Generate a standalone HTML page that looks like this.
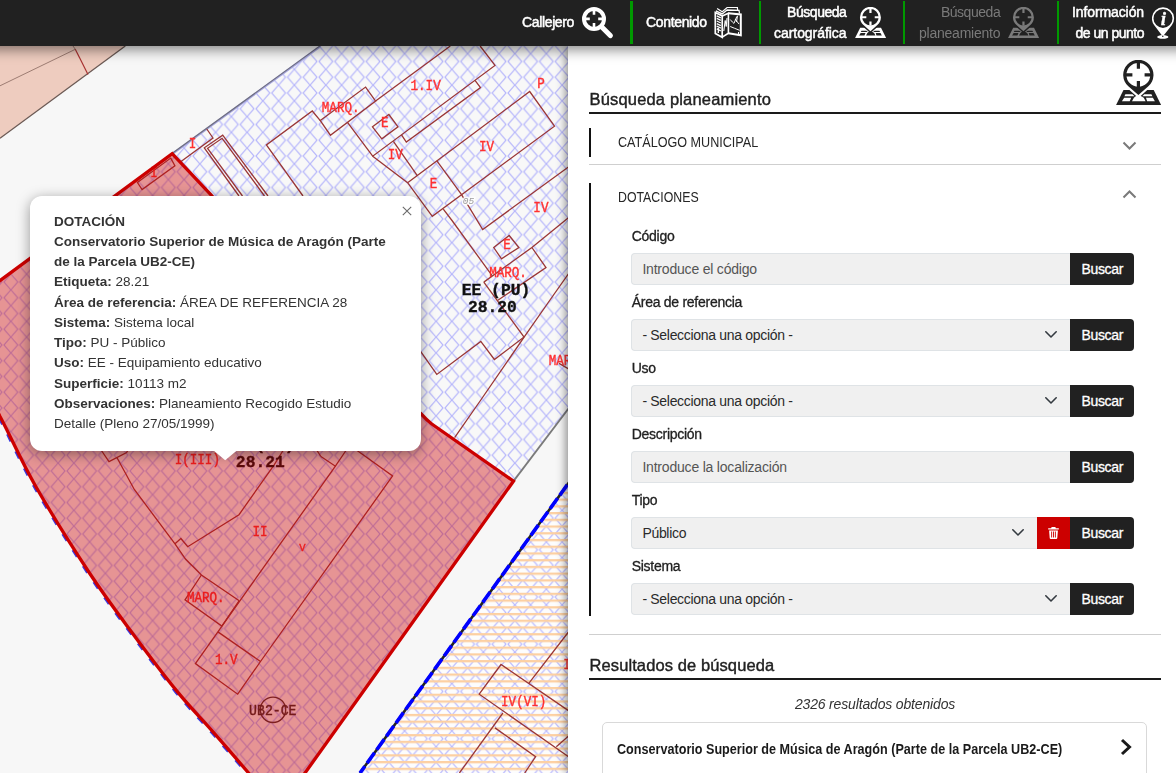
<!DOCTYPE html>
<html lang="es">
<head>
<meta charset="utf-8">
<title>Búsqueda planeamiento</title>
<style>
*{box-sizing:border-box}
html,body{margin:0;padding:0}
body{width:1176px;height:773px;overflow:hidden;position:relative;background:#f7f7f7;font-family:"Liberation Sans",sans-serif;color:#212121}
#map{will-change:transform;position:absolute;left:0;top:0;width:1176px;height:773px}
#nav{will-change:transform;position:absolute;left:0;top:0;width:1176px;height:46px;background:#212121;z-index:30}
#navsh{position:absolute;left:-60px;top:0;width:1296px;height:46px;z-index:29;box-shadow:0 2px 12px 2px rgba(0,0,0,.45)}
#nav .sep{position:absolute;top:1px;height:43px;width:3px;background:#009900}
#nav .t{position:absolute;color:#fff;font-size:14px;line-height:20px;white-space:nowrap;text-align:right;-webkit-text-stroke:.5px #fff}
#nav .t.dis{color:#7a7a7a;-webkit-text-stroke:0}
#nav svg{position:absolute}
#panel{position:absolute;left:568px;top:46px;width:608px;height:727px;background:#fff;z-index:20;box-shadow:-2px 0 9px rgba(0,0,0,.45)}
.abs{position:absolute}
.h2{position:absolute;left:21.500px;font-size:16.500px;line-height:20px;letter-spacing:.17px;white-space:nowrap;color:#212121;-webkit-text-stroke:.4px #212121}
.rule{position:absolute;left:21px;width:572px;height:2px;background:#1a1a1a}
.hr{position:absolute;left:21px;width:572px;height:1px;background:#cfcfcf}
.bar{position:absolute;left:21px;width:2px;background:#111}
.acc{position:absolute;left:50.400px;font-size:14px;transform-origin:0 0;transform:scaleX(.9);line-height:18px;white-space:nowrap;color:#262626}
.lbl{position:absolute;left:63.700px;font-size:14px;letter-spacing:-.27px;line-height:18px;white-space:nowrap;color:#212121;-webkit-text-stroke:.3px #212121}
.inp{position:absolute;left:63px;width:440px;height:32px;background:#f0f0f0;border:1px solid #dfe3e6;border-right:0;border-radius:4px 0 0 4px;font-size:14px;line-height:30px;padding-left:10.400px;color:#555;white-space:nowrap;letter-spacing:-.2px}
.inp.sel{color:#2a2a2a;letter-spacing:-.31px}
.btn{position:absolute;left:502px;width:64px;height:32px;background:#212121;border-radius:0 4px 4px 0;color:#fff;font-size:14px;line-height:32px;text-align:center;letter-spacing:-.36px;padding-left:.5px;-webkit-text-stroke:.3px #fff}
.chev{position:absolute}
#popup{will-change:transform;position:absolute;left:30px;top:195.5px;width:390.5px;height:255px;background:#fff;border-radius:12px;z-index:10;box-shadow:0 3px 14px rgba(0,0,0,.4);font-size:13.5px;line-height:20.25px;color:#333}
#popup .c{position:absolute;left:24px;top:15.500px;white-space:nowrap}
#popup b{font-weight:700}
#tip{position:absolute;z-index:11}
</style>
</head>
<body>
<svg id="map" width="1176" height="773" viewBox="0 0 1176 773">
<defs>
<pattern id="dia" x="3.0" y="6.350" width="15.75" height="15.75" patternUnits="userSpaceOnUse">
<path d="M7.85,-0.1 L14.75,7.875 L7.85,15.85 L0.95,7.875 Z" fill="none" stroke="#5a5aff" stroke-opacity=".42" stroke-width="1.15"/>
</pattern>
<pattern id="ora" x="0" y="0.520" width="20" height="6.730" patternUnits="userSpaceOnUse">
<rect x="0" y="0" width="20" height="2.300" fill="#fdd0a2"/>
</pattern>
<clipPath id="cBlue"><polygon points="173,153.4 320.7,46 600,46 600,385 513.5,481.1 431.8,424 421.2,413.9 421,195 211,195"/></clipPath>
<clipPath id="cOra"><polygon points="570,481 364,767 360,773 600,773 600,481"/></clipPath>
<path id="redshape" d="M0,416.5 C10.9,436.7 20.7,460.1 35.5,486.0 C50.3,511.9 72.5,547.3 88.8,572.0 C105.1,596.7 118.4,614.2 133.2,634.2 C148.0,654.2 164.2,675.6 177.5,691.9 C190.8,708.2 201.2,718.3 213.0,731.8 C224.8,745.3 238.8,761.6 248.6,773.0 C258.4,784.4 264.1,790.8 272.0,800.0 L285.7,800 L513.5,481.1 L431.8,424 Q427,420.5 421.2,413.9 L300,300 L211,194.8 L172.200,153.600 L0,280.600 L-6,285 L-6,404 Z"/>
<clipPath id="hclip"><polygon points="173,153.4 320.7,46 600,46 600,367 513.5,481.1 300,420 211,195"/><use href="#redshape"/></clipPath>
</defs>
<rect width="1176" height="773" fill="#f7f7f7"/>
<!-- beige top-left -->
<polygon points="0,40 125.3,46 0,138.2" fill="#eeccbf"/>
<polygon points="0,46 125.3,46 0,138.2" fill="#eeccbf"/>
<line x1="125.3" y1="46" x2="0" y2="138.2" stroke="#6b5a55" stroke-width="1.3"/>
<line x1="0" y1="85.8" x2="75.3" y2="49.3" stroke="#7a5a52" stroke-width=".7"/>
<line x1="75.3" y1="49.3" x2="73" y2="46" stroke="#7a5a52" stroke-width=".7"/>
<line x1="75.3" y1="49.3" x2="88" y2="74.6" stroke="#a83232" stroke-width="1.2"/>
<!-- blue hatch region -->
<polygon points="173,153.4 320.7,46 600,46 600,367 513.5,481.1 300,420 211,195" fill="#f8f8f8"/>
<rect x="-10" y="40" width="620" height="770" fill="url(#dia)" clip-path="url(#hclip)"/>
<line x1="173" y1="153.4" x2="320.7" y2="46" stroke="#a4a4dc" stroke-width="2.200"/><line x1="173" y1="152.800" x2="320.7" y2="45.400" stroke="#6e6e7c" stroke-width="1.100"/>
<line x1="513.5" y1="481.1" x2="600" y2="367" stroke="#7a7a7a" stroke-width="1.800"/>
<!-- orange region -->
<polygon points="570,481 360,773 600,773 600,481" fill="#fdfdfd"/>
<polygon points="570,481 360,773 600,773 600,481" fill="url(#dia)"/>
<polygon points="570,481 360,773 600,773 600,481" fill="url(#ora)"/>
<g fill="none" stroke="#9a3636" stroke-width="1.300" stroke-linejoin="miter">
<!-- A small I building -->
<path d="M206.8,129 L213,138 L181,161.4"/>
<!-- B building 2 (double outline) -->
<path d="M239,196 L204.3,147.8 L222.7,135.2 L268,196"/>
<path d="M242.500,196 L207.600,148.300 L222.100,138.300 L264.500,196"/>
<!-- C building 3 -->
<path d="M303,196 L266.4,145 L312.3,111 L320.3,120.6"/>
<!-- D MARQ -->
<path d="M320.3,120.6 L365.6,87.1 L375.6,101 L330.4,135.2 Z"/>
<!-- E 1.IV -->
<path d="M375.6,101 L450.3,46"/>
<path d="M480.1,46 L495,65.4 L372.7,156.2 L347.5,122.3"/>
<!-- F E square -->
<path d="M372.5,126.8 L388.9,114.5 L398,126.8 L381.8,138.8 Z"/>
<!-- G narrow strip -->
<path d="M475,80.3 L480.5,87.6 L406.3,142 L401.5,134.9"/>
<!-- H -->
<path d="M372.7,156.2 L407.6,182.7 L432.3,216.3 L554.5,126.2 L529.7,91.5 L407.6,182.7"/>
<path d="M393.4,141.3 L417.3,175.6"/>
<path d="M436.7,160.7 L461.4,194.4 L482.7,229.5 L600,144"/>
<!-- K long diagonal -->
<path d="M443.3,209.2 L452,220.500 L492.300,275.900"/>
<path d="M483.800,282.100 L524.1,337.1"/>
<!-- L -->
<path d="M600,192 L531.9,247.5 L483.800,282.100"/>
<path d="M531.9,247.5 L546,267.6 L497.500,300.500"/>
<!-- M E square 2 -->
<path d="M493.7,247.5 L509.2,235.5 L518.9,247.5 L501.5,258.8 Z"/>
<!-- N -->
<path d="M600,229 L550,300 L524.1,337.1 L480.8,400 L454.6,437.7"/>
<path d="M524.1,337.1 L494.4,359.5 L480.8,341.4 L436.8,374.4 L421.3,352.4 L410,336"/>
<path d="M559,363.4 L600,387"/>
<!-- red-region lines -->
<path d="M170.700,158.100 L174.900,165.800 L142.100,189.600 L137.400,182.500 Z"/>
<path d="M100.4,449 L109,461.7 L126.6,452.6 L128,450"/>
<path d="M116.9,457.5 L134.3,489.5 L175,543.8 L185.500,559 L201.4,575 L239.2,600.7"/>
<path d="M175,543.8 L180.9,538.5 L187.7,546.7 L239,514.7 L274,465.2 L284,449"/>
<path d="M201.4,575 L185,599.8 L221.8,626 L239.2,600.7"/>
<path d="M320.9,456.5 L335.4,466.2 L347,449"/>
<path d="M316,449 L320.9,456.5"/>
<path d="M335.4,466.2 L195.4,663.6 L237.7,694.2 L260.5,661.5 L392.6,475.9 L355,449"/>
<path d="M217.9,631.9 L260.5,661.5"/>
<!-- orange region lines -->
<path d="M600,732 L563.3,707.1 L501,664.5 L479.2,694.2 L568.2,756.5 L600,778"/>
<path d="M528.6,683.7 L570,630 L600,591"/>
<path d="M502.9,713 L459.4,773"/>
<path d="M495,727.9 L535.6,756.6 L524.7,773"/>
<path d="M556.3,746.7 L570,734.8 L600,709"/>
</g>
<circle cx="273" cy="709.800" r="12.700" fill="none" stroke="#4a3434" stroke-width="1.400"/>

<g font-family="'Liberation Mono',monospace" font-size="14.200" fill="#ff3030" stroke="#ff3030" stroke-width=".4" text-anchor="middle">
<text x="192.400" y="147.600" textLength="7.55" lengthAdjust="spacingAndGlyphs">I</text>
<text x="154" y="177.400" textLength="7.55" lengthAdjust="spacingAndGlyphs">I</text>
<text x="340.700" y="111.600" textLength="37.75" lengthAdjust="spacingAndGlyphs">MARQ.</text>
<text x="425.600" y="90.100" textLength="30.20" lengthAdjust="spacingAndGlyphs">1.IV</text>
<text x="384.700" y="127.100" textLength="7.55" lengthAdjust="spacingAndGlyphs">E</text>
<text x="541" y="87.600" textLength="7.55" lengthAdjust="spacingAndGlyphs">P</text>
<text x="395.300" y="158.600" textLength="15.10" lengthAdjust="spacingAndGlyphs">IV</text>
<text x="486.600" y="150.800" textLength="15.10" lengthAdjust="spacingAndGlyphs">IV</text>
<text x="433.500" y="188.400" textLength="7.55" lengthAdjust="spacingAndGlyphs">E</text>
<text x="540.900" y="212.200" textLength="15.10" lengthAdjust="spacingAndGlyphs">IV</text>
<text x="507" y="249.000" textLength="7.55" lengthAdjust="spacingAndGlyphs">E</text>
<text x="508" y="276.800" textLength="37.75" lengthAdjust="spacingAndGlyphs">MARQ.</text>
<text x="567.500" y="364.600" textLength="37.75" lengthAdjust="spacingAndGlyphs">MARQ.</text>
<text x="197.300" y="464.400" textLength="45.30" lengthAdjust="spacingAndGlyphs">I(III)</text>
<text x="260" y="536.200" textLength="15.10" lengthAdjust="spacingAndGlyphs">II</text>
<text x="302.400" y="550.900" font-size="11.800" textLength="6.30" lengthAdjust="spacingAndGlyphs">V</text>
<text x="205.800" y="601.600" textLength="37.75" lengthAdjust="spacingAndGlyphs">MARQ.</text>
<text x="226.200" y="664.000" textLength="22.65" lengthAdjust="spacingAndGlyphs">1.V</text>
<text x="523.700" y="706.100" textLength="45.30" lengthAdjust="spacingAndGlyphs">IV(VI)</text>
<text x="567" y="669.000" textLength="7.55" lengthAdjust="spacingAndGlyphs">I</text>
</g>
<g font-family="'Liberation Mono',monospace" font-size="16.300" font-weight="700" fill="#111" stroke="#111" stroke-width=".35" text-anchor="middle">
<text x="496" y="294.700">EE (PU)</text>
<text x="492.400" y="311.500">28.20</text>
<text x="260.300" y="450.200">EE (PU)</text>
<text x="260.300" y="467.200">28.21</text>
</g>
<text x="272.800" y="715.100" font-family="'Liberation Mono',monospace" font-size="14.500" fill="#3a2c2c" stroke="#3a2c2c" stroke-width=".45" text-anchor="middle" textLength="47.500" lengthAdjust="spacingAndGlyphs">UB2-CE</text>
<g font-family="'Liberation Mono',monospace" font-size="9.500" font-style="italic" text-anchor="middle"><text x="468.500" y="204" stroke="#fff" stroke-width="3" stroke-opacity=".85" fill="#fff">05</text><text x="468.500" y="204" fill="#9a9a9a">05</text></g>

<!-- red selected polygon -->
<path d="M0,416.5 C10.9,436.7 20.7,460.1 35.5,486.0 C50.3,511.9 72.5,547.3 88.8,572.0 C105.1,596.7 118.4,614.2 133.2,634.2 C148.0,654.2 164.2,675.6 177.5,691.9 C190.8,708.2 201.2,718.3 213.0,731.8 C224.8,745.3 238.8,761.6 248.6,773.0 C258.4,784.4 264.1,790.8 272.0,800.0" transform="translate(-1.100,.800)" fill="none" stroke="#3a3ae0" stroke-width="3" stroke-dasharray="8 11"/>
<use href="#redshape" fill="#cc0000" fill-opacity=".4" stroke="#cc0000" stroke-width="3.300"/>
<!--x <path d="M172.8,153.4 L211,194.8 L300,300 L421.2,413.9 Q427,420.5 431.8,424 L513.5,481.1 L305,773 L248.6,773 L213,731.8 L177.5,691.9 L133.2,634.2 L88.8,572 L35.5,486 L0,416.5 L-5,416 L-5,281 L0,279 Z" fill="#cc0000" fill-opacity=".4" stroke="#cc0000" -->
<!-- dashed boundary -->
<line x1="570" y1="481" x2="360" y2="773" stroke="#222" stroke-width="2.600"/>
<line x1="570" y1="481" x2="360" y2="773" stroke="#0000ff" stroke-width="3.600" stroke-dasharray="12.700 3.800" stroke-dashoffset="11.700"/>
</svg>

<div id="navsh"></div>
<div id="nav">
<div class="sep" style="left:630px"></div>
<div class="sep" style="left:759px;width:2px"></div>
<div class="sep" style="left:903px;width:2px"></div>
<div class="sep" style="left:1057px;width:2px"></div>
<div class="t" id="n1" style="right:602px;top:12px;letter-spacing:-.37px">Callejero</div>
<div class="t" id="n2" style="right:469.300px;top:12px;letter-spacing:-.36px">Contenido</div>
<div class="t" id="n3a" style="right:329.600px;top:1.600px;letter-spacing:-.47px">Búsqueda</div>
<div class="t" id="n3b" style="right:329.600px;top:23px;letter-spacing:-.07px">cartográfica</div>
<div class="t dis" id="n4a" style="right:175.800px;top:1.600px;letter-spacing:-.47px">Búsqueda</div>
<div class="t dis" id="n4b" style="right:175.800px;top:23px;letter-spacing:-.245px">planeamiento</div>
<div class="t" id="n5a" style="right:32px;top:1.600px;letter-spacing:-.1px">Información</div>
<div class="t" id="n5b" style="right:32px;top:23px;letter-spacing:-.49px">de un punto</div>
<!-- magnifier -->
<svg style="left:582px;top:6px" width="32" height="33" viewBox="0 0 32 33"><g fill="none" stroke="#fff" stroke-linecap="round"><circle cx="12" cy="12.900" r="10" stroke-width="4"/><path d="M12,4.500v4.200M12,17.100v4.200M3.600,12.900h4.200M16.200,12.900h4.200" stroke-width="2.600" stroke-linecap="butt"/><path d="M20.300,21.400 L28.300,29.600" stroke-width="5"/></g></svg>
<!-- map -->
<svg style="left:714.400px;top:5.800px" width="30" height="34" viewBox="0 0 30 34"><g fill="none" stroke="#fff" stroke-linejoin="miter">
<path d="M1.800,4.800 L8.200,7.900 L13.100,4 L25,4.400 L25.500,7.500" stroke-width="1.300"/>
<path d="M3.100,2.500 L8.200,5.700 L13.100,1.500 L23.400,1.500 L23.600,4" stroke-width="1.200"/>
<path d="M1.300,6.500 L8.200,9.900 L8.200,31.200 L1.300,27.400 Z" stroke-width="1.700"/>
<path d="M8.200,9.900 L14.400,7.300 L14.400,27.200 L8.200,31.200" stroke-width="1.600"/>
<path d="M14.400,7.300 L26.800,8.400 L26.800,29.300 L14.400,27.200" stroke-width="2"/>
<path d="M2.800,9.800 l4,2 M2.800,12.400 l4,2 M2.800,15 l4,2 M2.800,17.600 l4,2 M2.800,20.200 l4,2 M2.800,22.800 l4,2 M4.300,22 v5" stroke-width="1.300"/>
<path d="M9.800,25 L11.200,14.500 L12.200,20.500 L13,12" stroke-width="1"/>
<path d="M16.200,13.500 C18,15.500 19,17 20,17.300 L22.800,10.500 M21,13 L25,18 M16.200,20.500 C19,21.500 22,23 25.600,24.300 M23.500,9.800 L22.500,16 M24.500,26 v2" stroke-width="1"/>
</g></svg>
<!-- pin on map (white) -->
<svg style="left:854.500px;top:7px;color:#fff;--bg:#212121" width="31.200" height="31.200" viewBox="0 0 45.200 45.200"><use href="#pinmap"/></svg>
<svg style="left:1008.200px;top:7px;color:#7a7a7a;--bg:#212121" width="31.200" height="31.200" viewBox="0 0 45.200 45.200"><use href="#pinmap"/></svg>
<!-- info pin -->
<svg style="left:1152px;top:6.500px" width="24" height="33" viewBox="0 0 24 33"><path d="M2.270,18.250 A11.100,11.100 0 1 1 19.730,18.250 L10.800,29.400 Z M11,1.900 A9.500,9.500 0 0 0 11,20.900 A9.500,9.500 0 0 0 11,1.900 Z" fill="#fff" fill-rule="evenodd"/><ellipse cx="10.800" cy="29.900" rx="5.600" ry="1.800" fill="#fff"/><circle cx="10.800" cy="29.300" r=".8" fill="#212121"/><text x="11.300" y="18.200" font-family="'Liberation Serif',serif" font-style="italic" font-weight="700" font-size="19" fill="#fff" stroke="#fff" stroke-width=".3" text-anchor="middle">i</text></svg>
<svg width="0" height="0" style="position:absolute"><defs><g id="pinmap">
<path d="M7.500,30 L37.700,30 L45.100,45 L0.100,45 Z" fill="currentColor"/>
<path d="M12.330,26.260 A15.150,15.150 0 1 1 32.370,26.260 L22.400,35.100 Z" fill="var(--bg)" stroke="var(--bg)" stroke-width="4.200" stroke-linejoin="round"/>
<path d="M9.400,34.300 L16.500,34.300 L18.500,36.200 L8.400,36.200 Z M5.900,41.300 L8.200,37.800 L15.200,37.800 L13.700,41.300 Z M16,41.300 L17.900,37.800 L20,36 L24.800,36 L27.800,37.800 L29.600,41.300 Z M28.300,34.300 L35.400,34.300 L36.400,36.200 L26.300,36.200 Z M31.100,41.300 L30,37.800 L36.900,37.800 L38.900,41.300 Z" fill="var(--bg)"/>
<path d="M12.330,26.260 A15.150,15.150 0 1 1 32.370,26.260 L22.400,35.100 Z M22.350,3 A11.900,11.900 0 0 0 22.350,26.800 A11.900,11.900 0 0 0 22.350,3 Z" fill="currentColor" fill-rule="evenodd"/>
<path d="M20.800,2.500h3.200v6.200h-3.200z M20.800,21.100h3.200v6.200h-3.200z M10,13.350h6.400v3.100h-6.400z M28.600,13.350h6.400v3.100h-6.400z" fill="currentColor"/>
</g></defs></svg>
</div>

<div id="panel">
<div class="h2" id="h2a" style="top:43px">Búsqueda planeamiento</div>
<svg class="abs" style="left:548px;top:14px;color:#212121;--bg:#fff" width="45.200" height="45.200" viewBox="0 0 45.200 45.200"><use href="#pinmap"/></svg>
<div class="rule" style="top:66px"></div>
<div class="bar" style="top:82px;height:29px"></div>
<div class="acc" id="acc1" style="top:87.400px">CATÁLOGO MUNICIPAL</div>
<svg class="chev" style="left:554px;top:95px" width="15" height="10" viewBox="0 0 15 10"><path d="M1.500,1.500 L7.500,7.500 L13.500,1.500" fill="none" stroke="#7a7a7a" stroke-width="2"/></svg>
<div class="hr" style="top:118px"></div>
<div class="bar" style="top:137px;height:433px"></div>
<div class="acc" id="acc2" style="top:142.300px;transform:scaleX(.881)">DOTACIONES</div>
<svg class="chev" style="left:554px;top:143px" width="15" height="10" viewBox="0 0 15 10"><path d="M1.500,8.500 L7.500,2.500 L13.500,8.500" fill="none" stroke="#7a7a7a" stroke-width="2"/></svg>

<div class="lbl" style="top:181px">Código</div>
<div class="inp" style="top:207px">Introduce el código</div>
<div class="btn" style="top:207px">Buscar</div>

<div class="lbl" style="top:247px">Área de referencia</div>
<div class="inp sel" style="top:273px">- Selecciona una opción -</div>
<svg class="chev" style="left:476px;top:284px" width="14" height="9" viewBox="0 0 14 9"><path d="M1.800,1.800 L7,7 L12.200,1.800" fill="none" stroke="#343a40" stroke-width="1.600" stroke-linecap="round" stroke-linejoin="round"/></svg>
<div class="btn" style="top:273px">Buscar</div>

<div class="lbl" style="top:313px">Uso</div>
<div class="inp sel" style="top:339px">- Selecciona una opción -</div>
<svg class="chev" style="left:476px;top:350px" width="14" height="9" viewBox="0 0 14 9"><path d="M1.800,1.800 L7,7 L12.200,1.800" fill="none" stroke="#343a40" stroke-width="1.600" stroke-linecap="round" stroke-linejoin="round"/></svg>
<div class="btn" style="top:339px">Buscar</div>

<div class="lbl" style="top:379px">Descripción</div>
<div class="inp" style="top:405px">Introduce la localización</div>
<div class="btn" style="top:405px">Buscar</div>

<div class="lbl" style="top:445px">Tipo</div>
<div class="inp sel" style="top:471px;width:407px">Público</div>
<svg class="chev" style="left:443px;top:482px" width="14" height="9" viewBox="0 0 14 9"><path d="M1.800,1.800 L7,7 L12.200,1.800" fill="none" stroke="#343a40" stroke-width="1.600" stroke-linecap="round" stroke-linejoin="round"/></svg>
<div class="abs" style="left:469px;top:471px;width:33px;height:32px;background:#cc0000"></div>
<svg class="abs" style="left:480px;top:481px" width="11" height="12" viewBox="0 0 11 12"><path d="M3.600,0 L7.400,0 L7.800,1.300 L10.800,1.300 L10.800,2.600 L.2,2.600 L.2,1.300 L3.200,1.300 Z M1.100,3.400 L9.900,3.400 L9.300,11 C9.250,11.600 8.900,12 8.300,12 L2.700,12 C2.100,12 1.750,11.600 1.700,11 Z M3.200,4.600 L3.200,10.600 L4.100,10.600 L4.100,4.600 Z M5.050,4.600 L5.050,10.600 L5.950,10.600 L5.950,4.600 Z M6.900,4.600 L6.900,10.600 L7.800,10.600 L7.800,4.600 Z" fill="#fff" fill-rule="evenodd"/></svg>
<div class="btn" style="top:471px">Buscar</div>

<div class="lbl" style="top:511px">Sistema</div>
<div class="inp sel" style="top:537px">- Selecciona una opción -</div>
<svg class="chev" style="left:476px;top:548px" width="14" height="9" viewBox="0 0 14 9"><path d="M1.800,1.800 L7,7 L12.200,1.800" fill="none" stroke="#343a40" stroke-width="1.600" stroke-linecap="round" stroke-linejoin="round"/></svg>
<div class="btn" style="top:537px">Buscar</div>

<div class="hr" style="top:588px"></div>
<div class="h2" id="h2b" style="top:609px;letter-spacing:.1px">Resultados de búsqueda</div>
<div class="rule" style="top:632px"></div>
<div class="abs" id="cnt" style="left:21px;width:572px;top:649px;text-align:center;font-style:italic;font-size:14px;line-height:18px;color:#333;letter-spacing:-.16px">2326 resultados obtenidos</div>
<div class="abs" style="left:34px;top:675.500px;width:545px;height:70px;border:1px solid #d9d9d9;border-radius:5px;background:#fff"></div>
<div class="abs" id="card" style="left:49px;top:694px;font-size:14px;line-height:18px;font-weight:700;white-space:nowrap;color:#1a1a1a;transform-origin:0 0;transform:scaleX(.9008)">Conservatorio Superior de Música de Aragón (Parte de la Parcela UB2-CE)</div>
<svg class="abs" style="left:551px;top:692px" width="14" height="18" viewBox="0 0 14 18"><path d="M3,2 L10.500,9 L3,16" fill="none" stroke="#1a1a1a" stroke-width="3"/></svg>
</div>

<div id="popup"><div class="c"><b>DOTACIÓN</b><br><b>Conservatorio Superior de Música de Aragón (Parte</b><br><b>de la Parcela UB2-CE)</b><br><b>Etiqueta:</b> 28.21<br><b>Área de referencia:</b> ÁREA DE REFERENCIA 28<br><b>Sistema:</b> Sistema local<br><b>Tipo:</b> PU - Público<br><b>Uso:</b> EE - Equipamiento educativo<br><b>Superficie:</b> 10113 m2<br><b>Observaciones:</b> Planeamiento Recogido Estudio<br>Detalle (Pleno 27/05/1999)</div>
<svg class="abs" style="left:371.5px;top:10px" width="10" height="10" viewBox="0 0 10 10"><path d="M.8,.8 L9.200,9.200 M9.200,.8 L.8,9.200" stroke="#6a6a6a" stroke-width="1.100" fill="none"/></svg>
</div>
<svg id="tip" style="left:205px;top:450px" width="40" height="14" viewBox="0 0 40 14"><path d="M8,0 L20.200,10.200 L32.500,0 Z" fill="#fff"/></svg>

</body>
</html>
